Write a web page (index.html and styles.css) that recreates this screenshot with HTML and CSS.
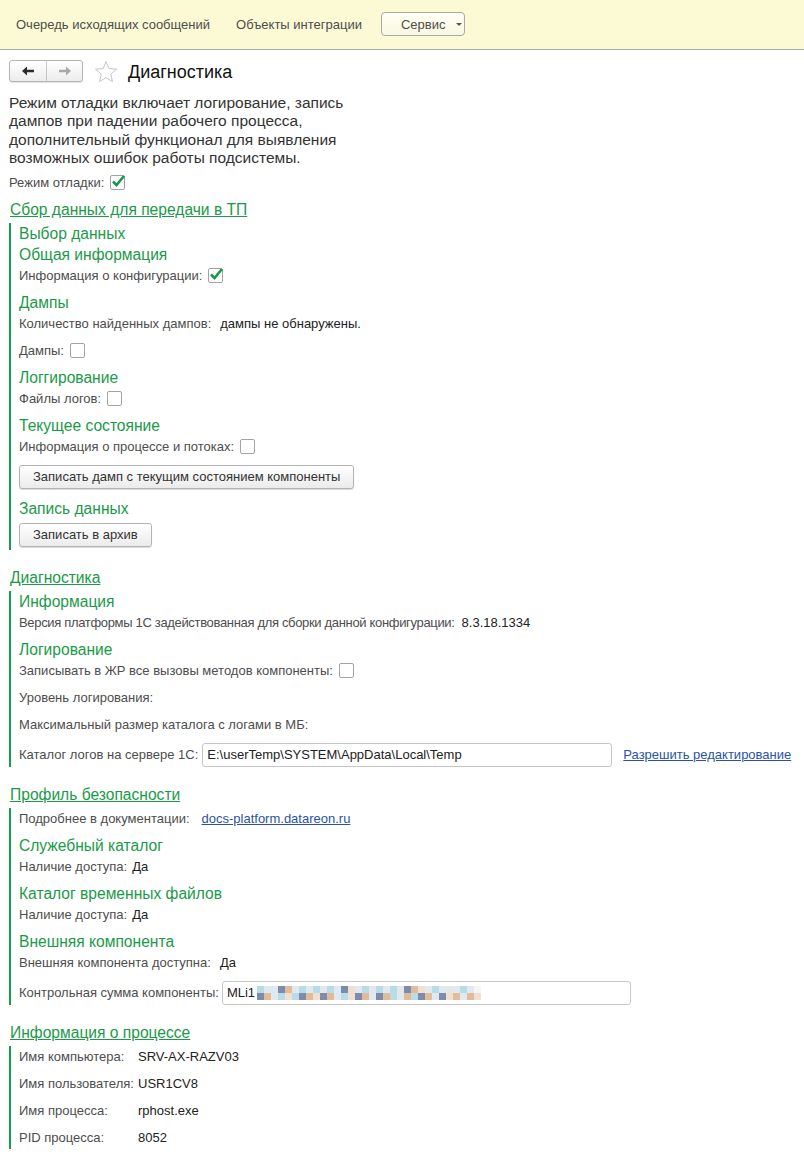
FILE: index.html
```html
<!DOCTYPE html>
<html lang="ru">
<head>
    <meta charset="UTF-8">
    <meta name="viewport" content="width=device-width, initial-scale=1.0">
    <title>Диагностика</title>
    <link rel="stylesheet" href="styles.css">
</head>
<body>
    <!-- command panel -->
    <div class="topbar">
        <a class="cmd">Очередь исходящих сообщений</a>
        <a class="cmd">Объекты интеграции</a>
        <button class="menu-btn">Сервис <span class="caret"></span></button>
    </div>

    <div class="page">
        <div class="head">
            <div class="nav">
                <span class="nav-btn">
                    <svg width="12" height="10" viewBox="0 0 12 10"><path d="M0 5 L5 0.5 V3.8 H12 V6.2 H5 V9.5 Z" fill="#2b2b2b"/></svg>
                </span>
                <span class="nav-btn">
                    <svg width="12" height="10" viewBox="0 0 12 10"><path d="M12 5 L7 0.5 V3.8 H0 V6.2 H7 V9.5 Z" fill="#a8a8a8"/></svg>
                </span>
            </div>
            <svg class="star" width="24" height="24" viewBox="0 0 24 24"><path d="M12 1.5 L14.9 8.6 L22.5 9.2 L16.7 14.1 L18.5 21.6 L12 17.6 L5.5 21.6 L7.3 14.1 L1.5 9.2 L9.1 8.6 Z" fill="#fff" stroke="#c4c4c4" stroke-width="1"/></svg>
            <h1>Диагностика</h1>
        </div>

        <p class="intro">Режим отладки включает логирование, запись<br>дампов при падении рабочего процесса,<br>дополнительный функционал для выявления<br>возможных ошибок работы подсистемы.</p>

        <div class="field debug">
            <span class="lbl">Режим отладки:</span>
            <span class="cb on"><svg width="17" height="15" viewBox="0 0 17 15"><path d="M3 7.5 L6.5 11 L14 2" fill="none" stroke="#17994a" stroke-width="2.6"/></svg></span>
        </div>

        <!-- collecting data for support -->
        <a class="sec-title first">Сбор данных для передачи в ТП</a>
        <div class="group">
            <h3 class="h">Выбор данных</h3>
            <h3 class="h">Общая информация</h3>
            <div class="field">
                <span class="lbl">Информация о конфигурации:</span>
                <span class="cb on"><svg width="17" height="15" viewBox="0 0 17 15"><path d="M3 7.5 L6.5 11 L14 2" fill="none" stroke="#17994a" stroke-width="2.6"/></svg></span>
            </div>
            <h3 class="h">Дампы</h3>
            <div class="field">
                <span class="lbl">Количество найденных дампов:</span>
                <span class="val wide">дампы не обнаружены.</span>
            </div>
            <div class="field">
                <span class="lbl">Дампы:</span>
                <span class="cb"></span>
            </div>
            <h3 class="h">Логгирование</h3>
            <div class="field">
                <span class="lbl">Файлы логов:</span>
                <span class="cb"></span>
            </div>
            <h3 class="h">Текущее состояние</h3>
            <div class="field">
                <span class="lbl">Информация о процессе и потоках:</span>
                <span class="cb"></span>
            </div>
            <button class="btn">Записать дамп с текущим состоянием компоненты</button>
            <h3 class="h">Запись данных</h3>
            <button class="btn">Записать в архив</button>
        </div>

        <!-- diagnostics -->
        <a class="sec-title">Диагностика</a>
        <div class="group">
            <h3 class="h">Информация</h3>
            <div class="field">
                <span class="lbl narrow">Версия платформы 1С задействованная для сборки данной конфигурации:</span>
                <span class="val">8.3.18.1334</span>
            </div>
            <h3 class="h">Логирование</h3>
            <div class="field">
                <span class="lbl">Записывать в ЖР все вызовы методов компоненты:</span>
                <span class="cb"></span>
            </div>
            <div class="field">
                <span class="lbl">Уровень логирования:</span>
            </div>
            <div class="field">
                <span class="lbl">Максимальный размер каталога с логами в МБ:</span>
            </div>
            <div class="field input-row">
                <span class="lbl">Каталог логов на сервере 1С:</span>
                <span class="inp log-dir">E:\userTemp\SYSTEM\AppData\Local\Temp</span>
                <a class="link edit">Разрешить редактирование</a>
            </div>
        </div>

        <!-- security profile -->
        <a class="sec-title">Профиль безопасности</a>
        <div class="group">
            <div class="field">
                <span class="lbl">Подробнее в документации:</span>
                <a class="link wide">docs-platform.datareon.ru</a>
            </div>
            <h3 class="h">Служебный каталог</h3>
            <div class="field">
                <span class="lbl">Наличие доступа:</span>
                <span class="val tight">Да</span>
            </div>
            <h3 class="h">Каталог временных файлов</h3>
            <div class="field">
                <span class="lbl">Наличие доступа:</span>
                <span class="val tight">Да</span>
            </div>
            <h3 class="h">Внешняя компонента</h3>
            <div class="field">
                <span class="lbl">Внешняя компонента доступна:</span>
                <span class="val wide">Да</span>
            </div>
            <div class="field input-row">
                <span class="lbl">Контрольная сумма компоненты:</span>
                <span class="inp checksum">MLi1<svg class="masked" width="224" height="14" viewBox="0 0 224 14">
                    <g>
                        <rect x="0" y="0" width="7" height="7" fill="#b7dbe9"/><rect x="7" y="0" width="7" height="7" fill="#dfeaf0"/><rect x="14" y="0" width="7" height="7" fill="#dfeaf0"/><rect x="21" y="0" width="7" height="7" fill="#7d8cab"/><rect x="28" y="0" width="7" height="7" fill="#e3bb98"/><rect x="35" y="0" width="7" height="7" fill="#dfeaf0"/><rect x="42" y="0" width="7" height="7" fill="#b7dbe9"/><rect x="49" y="0" width="7" height="7" fill="#dfeaf0"/><rect x="56" y="0" width="7" height="7" fill="#b7dbe9"/><rect x="63" y="0" width="7" height="7" fill="#e3e6ea"/><rect x="70" y="0" width="7" height="7" fill="#b7dbe9"/><rect x="77" y="0" width="7" height="7" fill="#dfeaf0"/><rect x="84" y="0" width="7" height="7" fill="#7d8cab"/><rect x="91" y="0" width="7" height="7" fill="#f1dfcf"/><rect x="98" y="0" width="7" height="7" fill="#dfeaf0"/><rect x="105" y="0" width="7" height="7" fill="#b7dbe9"/><rect x="112" y="0" width="7" height="7" fill="#e3e6ea"/><rect x="119" y="0" width="7" height="7" fill="#b7dbe9"/><rect x="126" y="0" width="7" height="7" fill="#dfeaf0"/><rect x="133" y="0" width="7" height="7" fill="#b7dbe9"/><rect x="140" y="0" width="7" height="7" fill="#e3e6ea"/><rect x="147" y="0" width="7" height="7" fill="#7d8cab"/><rect x="154" y="0" width="7" height="7" fill="#e3bb98"/><rect x="161" y="0" width="7" height="7" fill="#f1dfcf"/><rect x="168" y="0" width="7" height="7" fill="#dfeaf0"/><rect x="175" y="0" width="7" height="7" fill="#b7dbe9"/><rect x="182" y="0" width="7" height="7" fill="#dfeaf0"/><rect x="189" y="0" width="7" height="7" fill="#e3e6ea"/><rect x="196" y="0" width="7" height="7" fill="#dfeaf0"/><rect x="203" y="0" width="7" height="7" fill="#b7dbe9"/><rect x="210" y="0" width="7" height="7" fill="#dfeaf0"/><rect x="217" y="0" width="7" height="7" fill="#f4f6f8"/>
                        <rect x="0" y="7" width="7" height="7" fill="#7d8cab"/><rect x="7" y="7" width="7" height="7" fill="#e3bb98"/><rect x="14" y="7" width="7" height="7" fill="#dfeaf0"/><rect x="21" y="7" width="7" height="7" fill="#b7dbe9"/><rect x="28" y="7" width="7" height="7" fill="#f1dfcf"/><rect x="35" y="7" width="7" height="7" fill="#b7dbe9"/><rect x="42" y="7" width="7" height="7" fill="#7d8cab"/><rect x="49" y="7" width="7" height="7" fill="#e3bb98"/><rect x="56" y="7" width="7" height="7" fill="#f1dfcf"/><rect x="63" y="7" width="7" height="7" fill="#7d8cab"/><rect x="70" y="7" width="7" height="7" fill="#e3bb98"/><rect x="77" y="7" width="7" height="7" fill="#dfeaf0"/><rect x="84" y="7" width="7" height="7" fill="#b7dbe9"/><rect x="91" y="7" width="7" height="7" fill="#f1dfcf"/><rect x="98" y="7" width="7" height="7" fill="#7d8cab"/><rect x="105" y="7" width="7" height="7" fill="#e3bb98"/><rect x="112" y="7" width="7" height="7" fill="#dfeaf0"/><rect x="119" y="7" width="7" height="7" fill="#7d8cab"/><rect x="126" y="7" width="7" height="7" fill="#e3bb98"/><rect x="133" y="7" width="7" height="7" fill="#b7dbe9"/><rect x="140" y="7" width="7" height="7" fill="#dfeaf0"/><rect x="147" y="7" width="7" height="7" fill="#e3bb98"/><rect x="154" y="7" width="7" height="7" fill="#b7dbe9"/><rect x="161" y="7" width="7" height="7" fill="#7d8cab"/><rect x="168" y="7" width="7" height="7" fill="#e3bb98"/><rect x="175" y="7" width="7" height="7" fill="#dfeaf0"/><rect x="182" y="7" width="7" height="7" fill="#7d8cab"/><rect x="189" y="7" width="7" height="7" fill="#f1dfcf"/><rect x="196" y="7" width="7" height="7" fill="#e3bb98"/><rect x="203" y="7" width="7" height="7" fill="#dfeaf0"/><rect x="210" y="7" width="7" height="7" fill="#e3bb98"/><rect x="217" y="7" width="7" height="7" fill="#f1dfcf"/>
                    </g>
                </svg></span>
            </div>
        </div>

        <!-- process info -->
        <a class="sec-title">Информация о процессе</a>
        <div class="group">
            <div class="field">
                <span class="lbl col">Имя компьютера:</span>
                <span class="val">SRV-AX-RAZV03</span>
            </div>
            <div class="field">
                <span class="lbl col">Имя пользователя:</span>
                <span class="val">USR1CV8</span>
            </div>
            <div class="field">
                <span class="lbl col">Имя процесса:</span>
                <span class="val">rphost.exe</span>
            </div>
            <div class="field">
                <span class="lbl col">PID процесса:</span>
                <span class="val">8052</span>
            </div>
        </div>
    </div>
</body>
</html>
```

FILE: styles.css
```css
* { margin: 0; padding: 0; box-sizing: border-box; }
body { font-family: "Liberation Sans", Arial, sans-serif; font-size: 13px; color: #333; background: #fff; }

/* command panel */
.topbar { height: 50px; background: #fcfad4; border-bottom: 1px solid #a9a9a9; display: flex; align-items: center; padding: 0 0 1px 16px; gap: 23px; }
.cmd { color: #4d4d4d; font-size: 13px; }
.cmd + .cmd { margin-left: 3px; }
.menu-btn { height: 24px; width: 84px; border: 1px solid #a8a8a8; border-radius: 4px; background: linear-gradient(#fffef4, #faf8e0); font: 13px "Liberation Sans", Arial, sans-serif; color: #4d4d4d; text-align: left; padding-left: 19px; display: flex; align-items: center; margin-left: -4px; }
.caret { width: 0; height: 0; border-left: 3px solid transparent; border-right: 3px solid transparent; border-top: 3px solid #555; margin-left: 11px; margin-top: 1px; }

.page { padding: 0 9px 20px; }

/* header */
.head { display: flex; align-items: center; height: 24px; margin-top: 10px; }
.nav { display: flex; height: 22px; border: 1px solid #b5b5b5; border-radius: 3px; background: linear-gradient(#fff, #ececec); box-shadow: 0 1px 1px rgba(0,0,0,0.12); margin-top: -2px; }
.nav-btn { width: 36px; display: flex; align-items: center; justify-content: center; }
.nav-btn + .nav-btn { border-left: 1px solid #c8c8c8; }
.star { margin-left: 11px; }
h1 { font-size: 18px; font-weight: normal; color: #111; margin-left: 10px; }

.intro { font-size: 15.5px; line-height: 18.4px; color: #333; margin-top: 10px; }

/* fields */
.field { display: flex; align-items: center; height: 22px; }
.field.debug { margin-top: 4px; }
.lbl { color: #4d4d4d; white-space: nowrap; }
.lbl.narrow { letter-spacing: -0.33px; }
.lbl.col { width: 119px; }
.val { color: #222; margin-left: 7px; }
.val.wide { margin-left: 9px; }
.lbl.col + .val { margin-left: 0; }
.val.tight { margin-left: 5px; }
.cb { width: 15px; height: 15px; border: 1px solid #a3a3a3; border-radius: 2px; background: #fff; margin-left: 6px; position: relative; }
.cb svg { position: absolute; left: -1px; top: -2px; }

.link { color: #2a52a6; text-decoration: underline; cursor: pointer; }
.link.wide { margin-left: 12px; }
.link.edit { margin-left: 11px; }

.inp { height: 24px; border: 1px solid #c6c6c6; border-radius: 3px; background: #fff; display: flex; align-items: center; padding-left: 4px; color: #222; white-space: nowrap; }
.log-dir { width: 410px; margin-left: 4px; }
.checksum { width: 409px; margin-left: 3px; }
.masked { margin-left: 2px; }

/* sections */
.sec-title { display: block; width: max-content; font-size: 15.6px; line-height: 20px; color: #1a9a48; text-decoration: underline; margin-top: 18px; margin-bottom: 3px; padding-left: 1px; }
.sec-title.first { margin-top: 6px; }
.group { border-left: 2px solid #13a04b; padding-left: 8px; display: flex; flex-direction: column; align-items: flex-start; }
.group > * { margin-top: 5px; }
.group > :first-child { margin-top: 0; }
.h { font-size: 15.6px; font-weight: normal; line-height: 21px; color: #1a9a48; }
.h + .h, .h + .field { margin-top: 0; }
.field.input-row { height: 24px; margin-top: 7px; }

.btn { height: 24px; padding: 0 13px; border: 1px solid #b3b3b3; border-radius: 3px; background: linear-gradient(#fff, #ebebeb); box-shadow: 0 1px 1px rgba(0,0,0,0.15); font: 13px "Liberation Sans", Arial, sans-serif; color: #333; cursor: pointer; }
.field + .btn { margin-top: 7px; }
.h + .btn { margin-top: 4px; }
.btn + .h { margin-top: 9px; }
.group > .btn:last-child { margin-bottom: 3px; }
```
